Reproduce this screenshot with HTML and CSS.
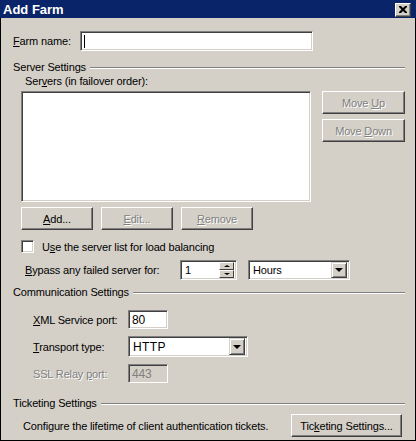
FILE: index.html
```html
<!DOCTYPE html>
<html lang="en">
<head>
    <meta charset="UTF-8">
    <title>Add Farm</title>
    <link rel="stylesheet" href="styles.css">
</head>
<body>
    <div class="window">
        <!-- Title bar -->
        <div class="titlebar">
            <span class="title">Add Farm</span>
            <span class="close-btn">
                <svg width="8" height="7" viewBox="0 0 8 7"><path d="M0 0h2l2 2 2-2h2v1l-2.5 2.5L8 6v1H6L4 5 2 7H0V6l2.5-2.5L0 1z" fill="#000"/></svg>
            </span>
        </div>

        <div class="content">
            <div class="row farm-row">
                <label class="farm-label"><u>F</u>arm name:</label>
                <div class="field farm-input"><span class="caret"></span></div>
            </div>

            <!-- Server Settings -->
            <div class="group-title server-title"><span>Server Settings</span><span class="rule"></span></div>
            <div class="servers-label">Ser<u>v</u>ers (in failover order):</div>
            <div class="list-row">
                <div class="field listbox"></div>
                <div class="side-buttons">
                    <div class="btn side-btn disabled"><span>Move <u>U</u>p</span></div>
                    <div class="btn side-btn disabled"><span>Move <u>D</u>own</span></div>
                </div>
            </div>
            <div class="btn-row">
                <div class="btn small-btn"><span><u>A</u>dd...</span></div>
                <div class="btn small-btn disabled"><span><u>E</u>dit...</span></div>
                <div class="btn small-btn disabled"><span><u>R</u>emove</span></div>
            </div>
            <div class="check-row">
                <span class="checkbox"></span>
                <span>U<u>s</u>e the server list for load balancing</span>
            </div>
            <div class="bypass-row">
                <label class="bypass-label"><u>B</u>ypass any failed server for:</label>
                <div class="field spinner">
                    <span class="value">1</span>
                    <span class="spin-btns">
                        <span class="spin-btn"><i class="tri-up"></i></span>
                        <span class="spin-btn"><i class="tri-down"></i></span>
                    </span>
                </div>
                <div class="field combo hours">
                    <span class="value">Hours</span>
                    <span class="drop-btn"><i class="tri-drop"></i></span>
                </div>
            </div>

            <!-- Communication Settings -->
            <div class="group-title comm-title"><span>Communication Settings</span><span class="rule"></span></div>
            <div class="comm-grid">
                <label class="xml-label"><u>X</u>ML Service port:</label>
                <div class="field port-input"><span class="value">80</span></div>
                <label class="transport-label"><u>T</u>ransport type:</label>
                <div class="field combo transport">
                    <span class="value">HTTP</span>
                    <span class="drop-btn"><i class="tri-drop"></i></span>
                </div>
                <label class="ssl-label disabled-text">SSL Relay <u>p</u>ort:</label>
                <div class="field port-input readonly"><span class="value">443</span></div>
            </div>

            <!-- Ticketing Settings -->
            <div class="group-title ticket-title"><span>Ticketing Settings</span><span class="rule"></span></div>
            <div class="ticket-row">
                <span>Configure the lifetime of client authentication tickets.</span>
                <div class="btn ticket-btn"><span>Tic<u>k</u>eting Settings...</span></div>
            </div>
        </div>
    </div>
</body>
</html>
```

FILE: styles.css
```css
body {
    margin: 0;
    padding: 0;
    background: #d4d0c8;
    font-family: "Liberation Sans", Arial, sans-serif;
    font-size: 11px;
    letter-spacing: -0.15px;
    color: #000;
}
.window {
    width: 416px;
    height: 441px;
    box-sizing: border-box;
    background: #d4d0c8;
    border: 1px solid #000;
    border-top: none;
    display: flex;
    flex-direction: column;
}
.titlebar {
    height: 18px;
    margin: 0 -1px;
    background: #0a246a;
    display: flex;
    align-items: center;
    justify-content: space-between;
    padding: 0 5px 0 3px;
}
.title {
    color: #fff;
    font-weight: bold;
    font-size: 13px;
    letter-spacing: 0;
}
.close-btn {
    width: 14px;
    height: 12px;
    background: #d4d0c8;
    border: 1px solid;
    border-color: #fff #404040 #404040 #fff;
    box-shadow: inset -1px -1px #808080;
    display: flex;
    align-items: center;
    justify-content: center;
    margin-top: 2px;
}
.close-btn svg {
    display: block;
    margin-top: -1px;
}
.content {
    padding: 0 10px 0 12px;
    display: flex;
    flex-direction: column;
}
label {
    cursor: default;
}

/* 3D borders */
.field {
    box-sizing: border-box;
    background: #fff;
    border: 1px solid;
    border-color: #808080 #fff #fff #808080;
    box-shadow: inset 1px 1px #404040, inset -1px -1px #d4d0c8;
}
.field.readonly {
    background: #d4d0c8;
    color: #808080;
}
.btn {
    box-sizing: border-box;
    height: 23px;
    background: #d4d0c8;
    border: 1px solid;
    border-color: #fff #404040 #404040 #fff;
    box-shadow: inset -1px -1px #808080;
    display: flex;
    align-items: center;
    justify-content: center;
}
.disabled, .disabled-text {
    color: #808080;
    text-shadow: 1px 1px 0 #fff;
}

.row {
    display: flex;
    align-items: center;
}
.farm-row {
    margin-top: 13px;
    height: 20px;
}
.farm-label {
    width: 67px;
}
.farm-input {
    width: 233px;
    height: 20px;
    padding: 3px 3px;
}
.caret {
    display: block;
    width: 1px;
    height: 13px;
    background: #000;
}

.group-title {
    display: flex;
    align-items: center;
    height: 13px;
    line-height: 13px;
}
.group-title .rule {
    flex: 1;
    margin-left: 4px;
    border-top: 1px solid #808080;
    border-bottom: 1px solid #fff;
}
.server-title {
    margin-top: 10px;
}
.servers-label {
    margin: 1px 0 0 12px;
    height: 13px;
    line-height: 13px;
}
.list-row {
    margin: 3px 0 0 8px;
    display: flex;
    justify-content: space-between;
}
.listbox {
    width: 290px;
    height: 111px;
}
.side-buttons {
    display: flex;
    flex-direction: column;
    gap: 5px;
}
.side-btn {
    width: 83px;
}
.btn-row {
    margin: 5px 0 0 8px;
    display: flex;
    gap: 8px;
}
.small-btn {
    width: 72px;
}
.check-row {
    margin: 10px 0 0 8px;
    height: 13px;
    display: flex;
    align-items: center;
    gap: 8px;
}
.checkbox {
    box-sizing: border-box;
    width: 13px;
    height: 13px;
    background: #fff;
    border: 1px solid;
    border-color: #808080 #fff #fff #808080;
    box-shadow: inset 1px 1px #404040, inset -1px -1px #d4d0c8;
}
.bypass-row {
    margin: 7px 0 0 12px;
    display: flex;
    align-items: center;
    height: 20px;
}
.bypass-label {
    width: 155px;
}
.spinner {
    width: 57px;
    height: 20px;
    display: flex;
    align-items: center;
    justify-content: space-between;
    padding: 2px 2px 2px 4px;
}
.value {
    line-height: 14px;
}
.spin-btns {
    display: flex;
    flex-direction: column;
    height: 16px;
}
.spin-btn {
    box-sizing: border-box;
    width: 15px;
    height: 8px;
    background: #d4d0c8;
    border: 1px solid;
    border-color: #fff #404040 #404040 #fff;
    display: flex;
    align-items: center;
    justify-content: center;
}
.tri-up, .tri-down, .tri-drop {
    display: block;
    width: 0;
    height: 0;
    border-left: 3px solid transparent;
    border-right: 3px solid transparent;
}
.tri-up {
    border-bottom: 2px solid #000;
}
.tri-down {
    border-top: 2px solid #000;
}
.tri-drop {
    border-left-width: 4px;
    border-right-width: 4px;
    border-top: 4px solid #000;
}
.combo {
    display: flex;
    align-items: center;
    justify-content: space-between;
    padding: 2px 2px 2px 4px;
}
.hours {
    margin-left: 11px;
    width: 102px;
    height: 20px;
}
.drop-btn {
    box-sizing: border-box;
    width: 16px;
    height: 16px;
    background: #d4d0c8;
    border: 1px solid;
    border-color: #d4d0c8 #404040 #404040 #d4d0c8;
    box-shadow: inset 1px 1px #fff, inset -1px -1px #808080;
    display: flex;
    align-items: center;
    justify-content: center;
}

.comm-title {
    margin-top: 6px;
}
.comm-grid {
    margin: 11px 0 0 20px;
    display: grid;
    grid-template-columns: 95px auto;
    grid-template-rows: 19px 21px 19px;
    row-gap: 7px;
    align-items: center;
    justify-items: start;
}
.port-input {
    width: 40px;
    height: 19px;
    padding: 2px 3px;
}
.transport {
    width: 120px;
    height: 21px;
    padding-left: 4px;
    font-size: 12px;
    letter-spacing: 0.4px;
}
.transport .drop-btn {
    height: 17px;
}
.port-input .value {
    font-size: 12px;
}

.ticket-title {
    margin-top: 14px;
}
.ticket-row {
    margin: 4px 0 0 10px;
    display: flex;
    align-items: center;
    justify-content: space-between;
    padding-right: 3px;
}
.ticket-btn {
    width: 111px;
}
```
